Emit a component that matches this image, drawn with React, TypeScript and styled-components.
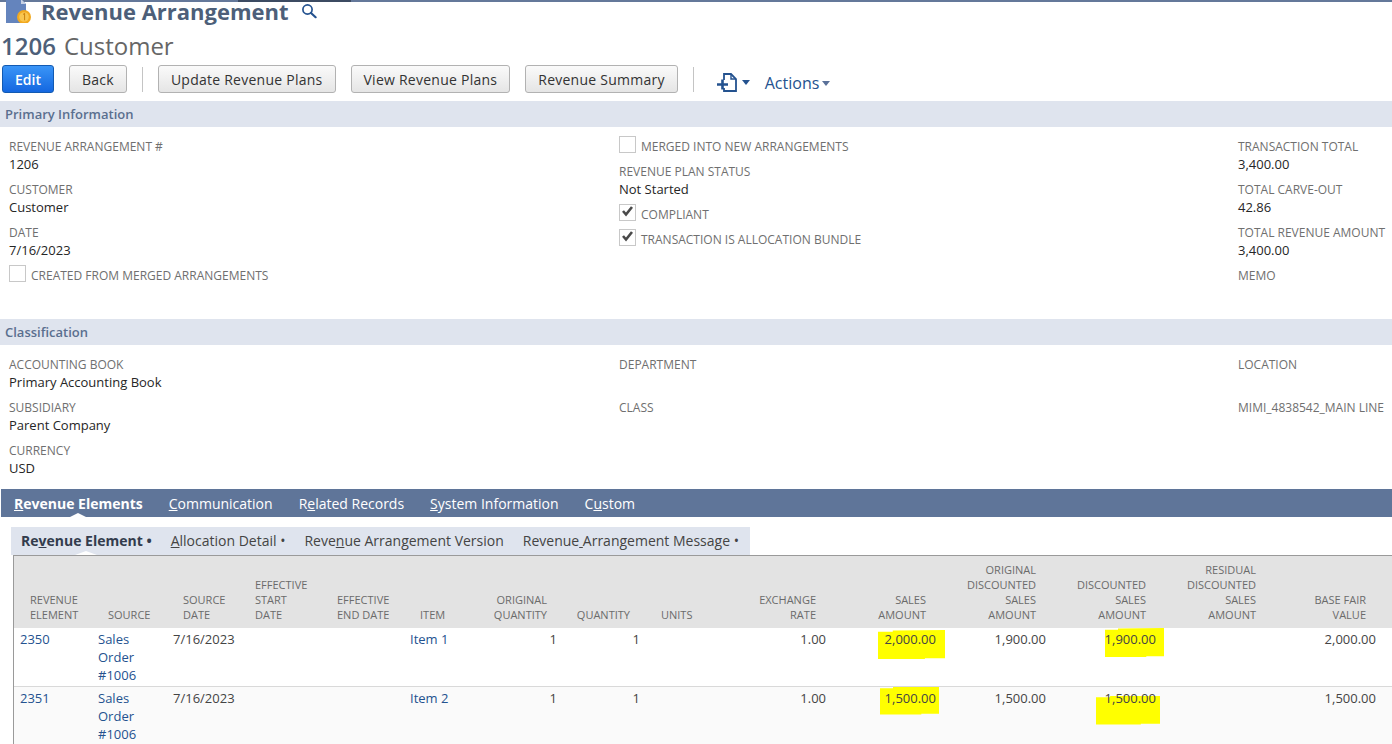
import React from 'react'
import styled, { createGlobalStyle } from 'styled-components'

const GlobalStyle = createGlobalStyle`
  html, body {
    margin: 0;
    padding: 0;
    height: 744px;
    overflow: hidden;
    background: #fff;
    font-family: "Open Sans", "Liberation Sans", sans-serif;
    font-size: 13px;
    color: #262626;
  }
`

type FieldData = { label: string; value?: string }

const classification: FieldData[][] = [
  [
    { label: 'Accounting Book', value: 'Primary Accounting Book' },
    { label: 'Subsidiary', value: 'Parent Company' },
    { label: 'Currency', value: 'USD' },
  ],
  [{ label: 'Department', value: '\u00a0' }, { label: 'Class' }],
  [{ label: 'Location', value: '\u00a0' }, { label: 'MIMI_4838542_MAIN LINE' }],
]

const columns = [78, 75, 72, 82, 83, 66, 92, 83, 96, 90, 110, 110, 110, 110, 110, 12]

const headers: { text: string[]; right?: boolean }[] = [
  { text: ['Revenue', 'Element'] },
  { text: ['Source'] },
  { text: ['Source', 'Date'] },
  { text: ['Effective', 'Start', 'Date'] },
  { text: ['Effective', 'End Date'] },
  { text: ['Item'] },
  { text: ['Original', 'Quantity'], right: true },
  { text: ['Quantity'], right: true },
  { text: ['Units'] },
  { text: ['Exchange', 'Rate'], right: true },
  { text: ['Sales', 'Amount'], right: true },
  { text: ['Original', 'Discounted', 'Sales', 'Amount'], right: true },
  { text: ['Discounted', 'Sales', 'Amount'], right: true },
  { text: ['Residual', 'Discounted', 'Sales', 'Amount'], right: true },
  { text: ['Base Fair', 'Value'], right: true },
]

const rows = [
  {
    id: '2350',
    item: 'Item 1',
    sales: '2,000.00',
    originalDiscounted: '1,900.00',
    discounted: '1,900.00',
    fair: '2,000.00',
    salesMark: { $left: -63, $top: 2, $width: 67, $height: 29 },
    discountedMark: { $left: -56, $top: 0, $width: 59, $height: 29 },
  },
  {
    id: '2351',
    item: 'Item 2',
    sales: '1,500.00',
    originalDiscounted: '1,500.00',
    discounted: '1,500.00',
    fair: '1,500.00',
    salesMark: { $left: -61, $top: 0, $width: 59, $height: 28 },
    discountedMark: { $left: -65, $top: 9, $width: 64, $height: 29 },
  },
]

const Page = styled.div`
  width: 1392px;
  height: 744px;
  overflow: hidden;
`

const TopStrip = styled.div`
  height: 2px;
  background: linear-gradient(
    to right,
    #64789a 0,
    #64789a 238px,
    #3c4b62 238px,
    #3c4b62 351px,
    #64789a 351px
  );
`

const TitleRow = styled.div`
  display: flex;
  align-items: center;
  height: 18px;
  padding-left: 5px;
  gap: 10px;
`

const PageIcon = styled.svg`
  width: 26px;
  height: 24px;
  flex: none;
`

const Title = styled.h1`
  margin: 0;
  font-size: 22px;
  line-height: 18px;
  font-weight: 700;
  color: #4d5f79;
`

const SearchIcon = styled.svg`
  width: 16px;
  height: 16px;
  margin-left: 2px;
`

const RecordRow = styled.div`
  display: flex;
  align-items: center;
  gap: 8px;
  height: 30px;
  margin-top: 11px;
  padding-left: 1px;
  font-size: 24px;
  line-height: 30px;
  color: #666;
`

const RecordNumber = styled.span`
  font-weight: 600;
  color: #4d5f79;
`

const Toolbar = styled.div`
  display: flex;
  align-items: center;
  height: 28px;
  margin-top: 4px;
  padding-left: 2px;
`

const Button = styled.button<{ $primary?: boolean }>`
  height: 28px;
  padding: 0 12px;
  margin-right: 15px;
  border-radius: 3px;
  font-family: inherit;
  font-size: 14px;
  letter-spacing: ${(p) => (p.$primary ? '0' : '0.25px')};
  font-weight: ${(p) => (p.$primary ? 600 : 400)};
  color: ${(p) => (p.$primary ? '#fff' : '#333')};
  border: 1px solid ${(p) => (p.$primary ? '#125ab2' : '#b2b2b2')};
  background: ${(p) =>
    p.$primary
      ? 'linear-gradient(to bottom, #3a95f7, #1467e0)'
      : 'linear-gradient(to bottom, #fafafa, #e5e5e5)'};
`

const ToolbarDivider = styled.div`
  width: 1px;
  height: 25px;
  background: #c4c4c4;
  margin-right: 15px;
`

const NewButton = styled.div`
  display: flex;
  align-items: center;
  gap: 4px;
  margin: 6px 15px 0 8px;
`

const NewIcon = styled.svg`
  width: 21px;
  height: 19px;
`

const Caret = styled.span<{ $grey?: boolean }>`
  display: inline-block;
  border-left: 4px solid transparent;
  border-right: 4px solid transparent;
  border-top: 5px solid ${(p) => (p.$grey ? '#5a7199' : '#24528f')};
`

const Actions = styled.div`
  display: flex;
  align-items: center;
  gap: 3px;
  margin-top: 8px;
  font-size: 16px;
  color: #24528f;
`

const SectionBar = styled.div`
  height: 26px;
  margin-top: ${(p: { $top: number }) => p.$top}px;
  padding-left: 5px;
  background: #dfe4ee;
  font-size: 13px;
  font-weight: 600;
  line-height: 26px;
  color: #5a6f8f;
`

const FieldGrid = styled.div<{ $height: number }>`
  display: grid;
  grid-template-columns: 610px 619px 1fr;
  height: ${(p) => p.$height}px;
  padding: 11px 0 0 9px;
  box-sizing: border-box;
`

const FieldColumn = styled.div`
  display: flex;
  flex-direction: column;
`

const Field = styled.div`
  display: flex;
  flex-direction: column;
  margin-bottom: 8px;
`

const Label = styled.span`
  font-size: 12px;
  line-height: 18px;
  text-transform: uppercase;
  color: #6f6f6f;
  white-space: nowrap;
`

const Value = styled.span`
  margin-top: -1px;
  font-size: 13px;
  line-height: 18px;
  color: #262626;
`

const CheckRow = styled.label`
  display: flex;
  align-items: flex-end;
  gap: 5px;
  height: 18px;
  margin-bottom: 7px;
`

const CheckBox = styled.span`
  position: relative;
  display: block;
  flex: none;
  width: 15px;
  height: 15px;
  margin-bottom: 3px;
  border: 1px solid #c8c8c8;
`

const CheckMark = styled.svg`
  position: absolute;
  left: 1px;
  top: 0;
  width: 13px;
  height: 12px;
`

const TabBar = styled.div`
  display: flex;
  gap: 26px;
  height: 28px;
  margin-left: 1px;
  padding-left: 13px;
  background: #5f7599;
`

const Tab = styled.div<{ $active?: boolean }>`
  position: relative;
  font-size: 14px;
  line-height: 29px;
  font-weight: ${(p) => (p.$active ? 700 : 400)};
  color: #fff;
`

const TabNotch = styled.span`
  position: absolute;
  left: 50%;
  bottom: 0;
  margin-left: -8px;
  border-left: 8px solid transparent;
  border-right: 8px solid transparent;
  border-bottom: 4px solid #fff;
`

const SubTabBar = styled.div`
  display: flex;
  gap: 19px;
  width: 729px;
  height: 28px;
  margin: 10px 0 0 11px;
  padding-left: 10px;
  background: #dfe4ee;
`

const SubTab = styled.div<{ $active?: boolean }>`
  position: relative;
  font-size: 14px;
  line-height: 28px;
  white-space: pre;
  font-weight: ${(p) => (p.$active ? 700 : 400)};
  color: ${(p) => (p.$active ? '#333c4d' : '#444')};
`

const SubTabNotch = styled(TabNotch)`
  margin-left: -11px;
  border-left-width: 11px;
  border-right-width: 11px;
`

const TableFrame = styled.div`
  margin-left: 13px;
  border-top: 1px solid #9a9a9a;
  border-left: 1px solid #9a9a9a;
`

const Table = styled.table`
  table-layout: fixed;
  width: 1378px;
  border-collapse: collapse;
`

const HeadRow = styled.tr`
  height: 72px;
  background: #e3e3e3;
`

const Th = styled.th<{ $right?: boolean }>`
  padding: 0 ${(p) => (p.$right ? '15px' : '0')} 6px ${(p) => (p.$right ? '0' : '16px')};
  vertical-align: bottom;
  text-align: ${(p) => (p.$right ? 'right' : 'left')};
  font-size: 11px;
  line-height: 15px;
  font-weight: 400;
  text-transform: uppercase;
  color: #6b6b6b;
  white-space: nowrap;
`

const BodyRow = styled.tr<{ $alt?: boolean }>`
  height: 58px;
  background: ${(p) => (p.$alt ? '#fafafa' : '#fff')};
  border-bottom: 1px solid #d9d9d9;
`

const Td = styled.td<{ $right?: boolean }>`
  position: relative;
  padding: 2px ${(p) => (p.$right ? '5px' : '0')} 0 ${(p) => (p.$right ? '0' : '6px')};
  vertical-align: top;
  text-align: ${(p) => (p.$right ? 'right' : 'left')};
  font-size: 13px;
  line-height: 18px;
  color: #444;
`

const CellLink = styled.a`
  color: #24528f;
  display: block;
`

const CellText = styled.span`
  position: relative;
`

const Marker = styled.span<{ $left: number; $top: number; $width: number; $height: number }>`
  position: absolute;
  left: calc(100% + ${(p) => p.$left}px);
  top: ${(p) => p.$top}px;
  width: ${(p) => p.$width}px;
  height: ${(p) => p.$height}px;
  background: #ffff00;
  clip-path: polygon(0 6%, 22% 6%, 22% 2%, 100% 0, 100% 97%, 70% 97%, 70% 100%, 0 100%);
`

const u = (before: string, letter: string, after: string) => (
  <>
    {before}
    <u>{letter}</u>
    {after}
  </>
)

const Tick = () => (
  <CheckMark viewBox="0 0 13 12">
    <path d="M2 6l3 3.5L11 2" fill="none" stroke="#4a4a4a" strokeWidth="2.6" />
  </CheckMark>
)

export default function App() {
  return (
    <Page>
      <GlobalStyle />
      <TopStrip />
      <TitleRow>
        <PageIcon viewBox="0 0 26 24">
          <path d="M1 0h15l5 5v19H1z" fill="#6484bd" />
          <path d="M16 0l5 5h-5z" fill="#c5d0e4" />
          <circle cx="19" cy="18" r="7" fill="#f2a91f" />
          <circle cx="19" cy="18" r="4.8" fill="#f9c64f" />
          <path d="M18 15.5l1.6-1.2v7" fill="none" stroke="#c97f0c" strokeWidth="1" />
        </PageIcon>
        <Title>Revenue Arrangement</Title>
        <SearchIcon viewBox="0 0 16 16">
          <circle cx="6.5" cy="6.5" r="4.6" fill="none" stroke="#24528f" strokeWidth="1.7" />
          <path d="M10 10l4.6 4.2" stroke="#24528f" strokeWidth="2.2" strokeLinecap="round" />
        </SearchIcon>
      </TitleRow>
      <RecordRow>
        <RecordNumber>1206</RecordNumber>
        <span>Customer</span>
      </RecordRow>
      <Toolbar>
        <Button $primary>Edit</Button>
        <Button>Back</Button>
        <ToolbarDivider />
        <Button>Update Revenue Plans</Button>
        <Button>View Revenue Plans</Button>
        <Button>Revenue Summary</Button>
        <ToolbarDivider />
        <NewButton>
          <NewIcon viewBox="0 0 21 19">
            <path d="M7 7V1h7l5 5v12H7v-3" fill="none" stroke="#24528f" strokeWidth="1.8" />
            <path d="M14 1v5h5" fill="none" stroke="#24528f" strokeWidth="1.4" />
            <path d="M0 11.5h11M5.5 6.5v10" stroke="#24528f" strokeWidth="2.6" />
          </NewIcon>
          <Caret />
        </NewButton>
        <Actions>
          Actions
          <Caret $grey />
        </Actions>
      </Toolbar>
      <SectionBar $top={8}>Primary Information</SectionBar>
      <FieldGrid $height={192}>
        <FieldColumn>
          <Field>
            <Label>Revenue Arrangement #</Label>
            <Value>1206</Value>
          </Field>
          <Field>
            <Label>Customer</Label>
            <Value>Customer</Value>
          </Field>
          <Field>
            <Label>Date</Label>
            <Value>7/16/2023</Value>
          </Field>
          <CheckRow>
            <CheckBox />
            <Label>Created From Merged Arrangements</Label>
          </CheckRow>
        </FieldColumn>
        <FieldColumn>
          <CheckRow>
            <CheckBox />
            <Label>Merged Into New Arrangements</Label>
          </CheckRow>
          <Field>
            <Label>Revenue Plan Status</Label>
            <Value>Not Started</Value>
          </Field>
          <CheckRow>
            <CheckBox>
              <Tick />
            </CheckBox>
            <Label>Compliant</Label>
          </CheckRow>
          <CheckRow>
            <CheckBox>
              <Tick />
            </CheckBox>
            <Label>Transaction Is Allocation Bundle</Label>
          </CheckRow>
        </FieldColumn>
        <FieldColumn>
          <Field>
            <Label>Transaction Total</Label>
            <Value>3,400.00</Value>
          </Field>
          <Field>
            <Label>Total Carve-Out</Label>
            <Value>42.86</Value>
          </Field>
          <Field>
            <Label>Total Revenue Amount</Label>
            <Value>3,400.00</Value>
          </Field>
          <Field>
            <Label>Memo</Label>
          </Field>
        </FieldColumn>
      </FieldGrid>
      <SectionBar $top={0}>Classification</SectionBar>
      <FieldGrid $height={144}>
        {classification.map((column, i) => (
          <FieldColumn key={i}>
            {column.map((field) => (
              <Field key={field.label}>
                <Label>{field.label}</Label>
                {field.value && <Value>{field.value}</Value>}
              </Field>
            ))}
          </FieldColumn>
        ))}
      </FieldGrid>
      <TabBar>
        <Tab $active>
          {u('', 'R', 'evenue Elements')}
          <TabNotch />
        </Tab>
        <Tab>{u('', 'C', 'ommunication')}</Tab>
        <Tab>{u('R', 'e', 'lated Records')}</Tab>
        <Tab>{u('', 'S', 'ystem Information')}</Tab>
        <Tab>{u('C', 'u', 'stom')}</Tab>
      </TabBar>
      <SubTabBar>
        <SubTab $active>
          {u('Re', 'v', 'enue Element')} •
          <SubTabNotch />
        </SubTab>
        <SubTab>{u('', 'A', 'llocation Detail')} •</SubTab>
        <SubTab>{u('Reve', 'n', 'ue Arrangement Version')}</SubTab>
        <SubTab>{u('Revenue', ' ', 'Arrangement Message')} •</SubTab>
      </SubTabBar>
      <TableFrame>
        <Table>
          <colgroup>
            {columns.map((width, i) => (
              <col key={i} width={width} />
            ))}
          </colgroup>
          <thead>
            <HeadRow>
              {headers.map((header, i) => (
                <Th key={i} $right={header.right}>
                  {header.text.map((line) => (
                    <div key={line}>{line}</div>
                  ))}
                </Th>
              ))}
              <Th />
            </HeadRow>
          </thead>
          <tbody>
            {rows.map((row, i) => (
              <BodyRow key={row.id} $alt={i === 1}>
                <Td>
                  <CellLink>{row.id}</CellLink>
                </Td>
                <Td>
                  <CellLink>Sales</CellLink>
                  <CellLink>Order</CellLink>
                  <CellLink>#1006</CellLink>
                </Td>
                <Td>7/16/2023</Td>
                <Td />
                <Td />
                <Td>
                  <CellLink>{row.item}</CellLink>
                </Td>
                <Td $right>1</Td>
                <Td $right>1</Td>
                <Td />
                <Td $right>1.00</Td>
                <Td $right>
                  <Marker {...row.salesMark} />
                  <CellText>{row.sales}</CellText>
                </Td>
                <Td $right>{row.originalDiscounted}</Td>
                <Td $right>
                  <Marker {...row.discountedMark} />
                  <CellText>{row.discounted}</CellText>
                </Td>
                <Td />
                <Td $right>{row.fair}</Td>
                <Td />
              </BodyRow>
            ))}
          </tbody>
        </Table>
      </TableFrame>
    </Page>
  )
}
